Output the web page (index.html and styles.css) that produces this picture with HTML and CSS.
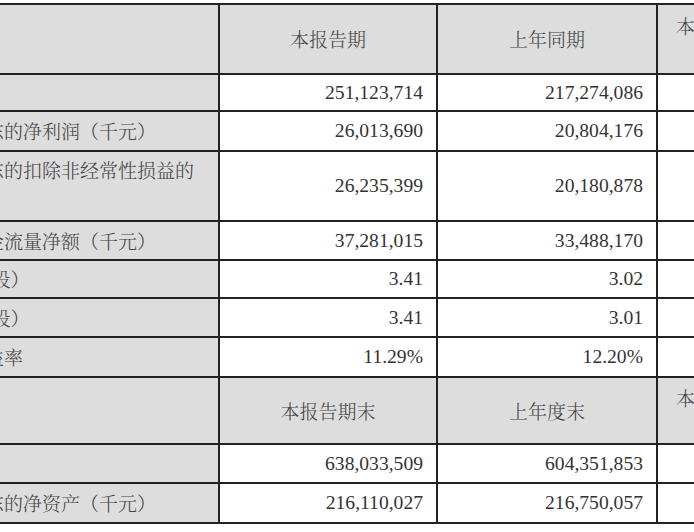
FILE: index.html
```html
<!DOCTYPE html>
<html lang="zh-CN">
<head>
<meta charset="utf-8">
<title>主要会计数据和财务指标</title>
<link rel="stylesheet" href="styles.css">
</head>
<body>
<div class="viewport">
  <div class="fin-table">
    <div class="cell label head"></div>
    <div class="cell head">本报告期</div>
    <div class="cell head">上年同期</div>
    <div class="cell head change">本报告期比上年同期增<br>减</div>

    <div class="cell label">营业收入（千元）</div>
    <div class="cell num">251,123,714</div>
    <div class="cell num">217,274,086</div>
    <div class="cell num">15.58%</div>

    <div class="cell label">归属于上市公司股东的净利润（千元）</div>
    <div class="cell num">26,013,690</div>
    <div class="cell num">20,804,176</div>
    <div class="cell num">25.04%</div>

    <div class="cell label">归属于上市公司股东的扣除非经常性损益的净利润（千元）</div>
    <div class="cell num">26,235,399</div>
    <div class="cell num">20,180,878</div>
    <div class="cell num">30.00%</div>

    <div class="cell label">经营活动产生的现金流量净额（千元）</div>
    <div class="cell num">37,281,015</div>
    <div class="cell num">33,488,170</div>
    <div class="cell num">11.33%</div>

    <div class="cell label">基本每股收益（元/股）</div>
    <div class="cell num">3.41</div>
    <div class="cell num">3.02</div>
    <div class="cell num">12.91%</div>

    <div class="cell label">稀释每股收益（元/股）</div>
    <div class="cell num">3.41</div>
    <div class="cell num">3.01</div>
    <div class="cell num">13.29%</div>

    <div class="cell label">加权平均净资产收益率</div>
    <div class="cell num">11.29%</div>
    <div class="cell num">12.20%</div>
    <div class="cell num">-0.91%</div>

    <div class="cell label head"></div>
    <div class="cell head">本报告期末</div>
    <div class="cell head">上年度末</div>
    <div class="cell head change">本报告期末比上年度末<br>增减</div>

    <div class="cell label">总资产（千元）</div>
    <div class="cell num">638,033,509</div>
    <div class="cell num">604,351,853</div>
    <div class="cell num">5.57%</div>

    <div class="cell label">归属于上市公司股东的净资产（千元）</div>
    <div class="cell num">216,110,027</div>
    <div class="cell num">216,750,057</div>
    <div class="cell num">-0.30%</div>
  </div>
</div>
</body>
</html>
```
FILE: styles.css
```css
html, body {
  margin: 0;
  padding: 0;
  background: #ffffff;
}

.viewport {
  width: 694px;
  height: 532px;
  overflow: hidden;
}

.fin-table {
  display: grid;
  grid-template-columns: 388px 218px 220px 228px;
  grid-template-rows: 70px 37px 40px 70px 39px 38px 39px 40px 67px 39px 40px;
  width: max-content;
  margin-top: 3px;
  margin-left: -170px;
  border-top: 2px solid #222;
  border-left: 2px solid #222;
  font-family: "Noto Serif CJK SC", "Liberation Serif", "Noto Sans CJK SC", serif;
  font-size: 19px;
  color: #444;
}

.cell {
  box-sizing: border-box;
  border-right: 2px solid #222;
  border-bottom: 2px solid #222;
  background: #ffffff;
  display: flex;
  flex-direction: column;
  justify-content: center;
  overflow: hidden;
}

.label {
  background: #dddddd;
  padding: 0 8px 0 1px;
  line-height: 32px;
  text-align: left;
  font-weight: 300;
}

.head {
  background: #dddddd;
  text-align: center;
  line-height: 26px;
  font-weight: 300;
}

.change {
  white-space: nowrap;
  padding: 0 9px;
  line-height: 27px;
}

.num {
  text-align: right;
  padding-right: 13px;
  font-family: "Liberation Serif", serif;
  font-size: 19.6px;
  color: #333;
}
```
